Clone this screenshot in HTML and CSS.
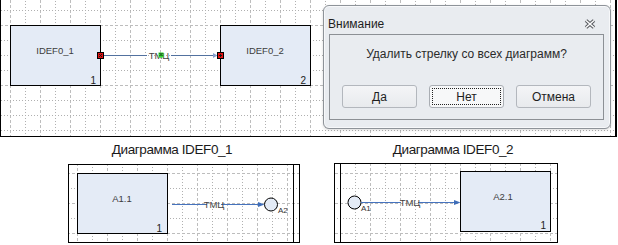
FILE: index.html
```html
<!DOCTYPE html>
<html lang="ru">
<head>
    <meta charset="UTF-8">
    <title>IDEF0 - Удаление стрелки</title>
    <link rel="stylesheet" href="styles.css">
</head>
<body>
    <div class="canvas canvas-main">
        <svg class="sheet" width="614" height="136">
            <defs>
                <pattern id="grid-main" x="9" y="25" width="30" height="60" patternUnits="userSpaceOnUse">
                    <line class="major" x1="0.5" y1="0" x2="0.5" y2="60"/>
                    <line class="minor" x1="15.5" y1="0" x2="15.5" y2="60"/>
                    <line class="major" x1="0" y1="0.5" x2="30" y2="0.5"/>
                    <line class="minor" x1="0" y1="15.5" x2="30" y2="15.5"/>
                    <line class="minor" x1="0" y1="30.5" x2="30" y2="30.5"/>
                    <line class="minor" x1="0" y1="45.5" x2="30" y2="45.5"/>
                </pattern>
            </defs>
            <rect width="614" height="136" fill="url(#grid-main)"/>

            <!-- blocks -->
            <rect class="box" x="9.5" y="25.5" width="90" height="60"/>
            <text class="box-name" x="54" y="54">IDEF0_1</text>
            <text class="box-num" x="95" y="84">1</text>

            <rect class="box" x="219.5" y="25.5" width="90" height="60"/>
            <text class="box-name" x="264" y="54">IDEF0_2</text>
            <text class="box-num" x="305" y="84">2</text>

            <!-- arrow -->
            <line class="link-main" x1="102" y1="55.5" x2="146" y2="55.5"/>
            <line class="link-main" x1="170" y1="55.5" x2="213" y2="55.5"/>
            <polygon class="head-main" points="212,53 216.5,55.5 212,58"/>
            <text class="link-label" x="158" y="59">ТМЦ</text>

            <rect class="grip-green" x="157.5" y="52.5" width="5" height="5"/>
            <path class="grip-mark" d="M158.5 53.5h1M160.5 53.5h1M159.5 54.5h1M158.5 55.5h1M160.5 55.5h1"/>

            <rect class="grip-red" x="96.5" y="52.5" width="6" height="6"/>
            <path class="grip-mark" d="M98 54.5h1M100 54.5h1M99 55.5h1M98 56.5h1M100 56.5h1"/>
            <rect class="grip-red" x="216.5" y="52.5" width="6" height="6"/>
            <path class="grip-mark" d="M219 54.5h1M218 55.5h3M219 56.5h1"/>
        </svg>

        <div class="dialog">
            <div class="dialog-head">
                <span class="dialog-title">Внимание</span>
                <svg class="dialog-close" width="12" height="10" viewBox="0 0 12 10">
                    <path d="M2 1.5 L10 8.5 M10 1.5 L2 8.5" stroke="#55585d" stroke-width="3.6" fill="none"/>
                    <path d="M2 1.5 L10 8.5 M10 1.5 L2 8.5" stroke="#fbfbfc" stroke-width="1.6" fill="none"/>
                </svg>
            </div>
            <div class="dialog-body">
                <p class="message">Удалить стрелку со всех диаграмм?</p>
                <div class="buttons">
                    <button class="btn">Да</button>
                    <button class="btn btn-focus">Нет</button>
                    <button class="btn">Отмена</button>
                </div>
            </div>
        </div>
    </div>

    <div class="row">
        <div class="panel">
            <div class="caption caption-left">Диаграмма IDEF0_1</div>
            <div class="canvas canvas-left">
                <svg class="sheet" width="230" height="77">
                    <defs>
                        <pattern id="grid-left" x="8" y="8" width="30" height="30" patternUnits="userSpaceOnUse">
                            <line class="major" x1="0.5" y1="0" x2="0.5" y2="30"/>
                            <line class="minor" x1="15.5" y1="0" x2="15.5" y2="30"/>
                            <line class="major" x1="0" y1="0.5" x2="30" y2="0.5"/>
                            <line class="minor" x1="0" y1="15.5" x2="30" y2="15.5"/>
                        </pattern>
                    </defs>
                    <rect width="230" height="77" fill="url(#grid-left)"/>

                    <rect class="box" x="8.5" y="8.5" width="90" height="60"/>
                    <text class="box-name" x="53" y="37">A1.1</text>
                    <text class="box-num" x="93" y="67">1</text>

                    <line class="link" x1="103" y1="39.5" x2="138" y2="39.5"/>
                    <line class="link" x1="152" y1="39.5" x2="190" y2="39.5"/>
                    <polygon class="head" points="189,37 195.5,39.5 189,42"/>
                    <text class="link-label" x="145" y="43">ТМЦ</text>

                    <circle class="node" cx="202" cy="39.5" r="6.5"/>
                    <text class="node-name" x="209" y="48">A2</text>

                    <line class="boundary" x1="224.5" y1="0" x2="224.5" y2="77"/>
                </svg>
            </div>
        </div>
        <div class="panel">
            <div class="caption caption-right">Диаграмма IDEF0_2</div>
            <div class="canvas canvas-right">
                <svg class="sheet" width="222" height="78">
                    <defs>
                        <pattern id="grid-right" x="5" y="9" width="30" height="30" patternUnits="userSpaceOnUse">
                            <line class="major" x1="0.5" y1="0" x2="0.5" y2="30"/>
                            <line class="minor" x1="15.5" y1="0" x2="15.5" y2="30"/>
                            <line class="major" x1="0" y1="0.5" x2="30" y2="0.5"/>
                            <line class="minor" x1="0" y1="15.5" x2="30" y2="15.5"/>
                        </pattern>
                    </defs>
                    <rect width="222" height="78" fill="url(#grid-right)"/>

                    <line class="boundary" x1="5.5" y1="0" x2="5.5" y2="78"/>

                    <circle class="node" cx="19.5" cy="38.5" r="6.5"/>
                    <text class="node-name" x="26" y="47">A1</text>

                    <line class="link" x1="26" y1="38.5" x2="66" y2="38.5"/>
                    <line class="link" x1="83" y1="38.5" x2="120" y2="38.5"/>
                    <polygon class="head" points="119,36 125.5,38.5 119,41"/>
                    <text class="link-label" x="75" y="42">ТМЦ</text>

                    <rect class="box" x="125.5" y="7.5" width="90" height="60"/>
                    <text class="box-name" x="168" y="36">A2.1</text>
                    <text class="box-num" x="211" y="65">1</text>
                </svg>
            </div>
        </div>
    </div>
</body>
</html>
```

FILE: styles.css
```css
body {
    margin: 0;
    width: 618px;
    height: 245px;
    overflow: hidden;
    background-color: #fff;
    font-family: 'Liberation Sans', Arial, sans-serif;
    color: #1a1a1a;
}
.canvas {
    position: relative;
    background-color: #fff;
}
.sheet {
    display: block;
}
.canvas-main {
    width: 614px;
    height: 136px;
    border-left: 1px solid #000;
    border-right: 2px solid #000;
    border-bottom: 1px solid #000;
}

/* grid */
.major {
    stroke: #bdbdbd;
    stroke-width: 1;
    stroke-dasharray: 3 2;
}
.minor {
    stroke: #b0b0b0;
    stroke-width: 1;
    stroke-dasharray: 1 2;
}

/* diagram parts */
.box {
    fill: #e4ebf6;
    stroke: #000;
    stroke-width: 1;
}
.box-name {
    font-family: 'Liberation Sans', Arial, sans-serif;
    font-size: 9.5px;
    fill: #3c3c3c;
    text-anchor: middle;
}
.box-num {
    font-family: 'Liberation Sans', Arial, sans-serif;
    font-size: 10px;
    fill: #222;
    text-anchor: end;
}
.link-main {
    stroke: #52719f;
    stroke-width: 1;
}
.head-main {
    fill: #86a3cf;
}
.link {
    stroke: #4673bd;
    stroke-width: 1;
}
.head {
    fill: #3f6db8;
}
.link-label {
    font-family: 'Liberation Sans', Arial, sans-serif;
    font-size: 9.5px;
    fill: #444;
    text-anchor: middle;
}
.grip-red {
    fill: #e31010;
    stroke: #000;
    stroke-width: 1;
}
.grip-green {
    fill: #30dd30;
}
.grip-mark {
    stroke: #1a1a1a;
    stroke-width: 1;
}
.node {
    fill: #e4ebf6;
    stroke: #000;
    stroke-width: 1;
}
.node-name {
    font-family: 'Liberation Sans', Arial, sans-serif;
    font-size: 8px;
    fill: #333;
}
.boundary {
    stroke: #000;
    stroke-width: 1;
}

/* dialog */
.dialog {
    position: absolute;
    left: 322px;
    top: 5px;
    width: 288px;
    height: 124px;
    box-sizing: border-box;
    border: 1px solid #8e9399;
    border-radius: 6px;
    background-color: #e9ecf0;
    box-shadow: inset 0 0 0 1px #f7f8fa, 0 1px 3px rgba(0, 0, 0, 0.15);
    font-size: 12px;
}
.dialog-head {
    display: flex;
    justify-content: space-between;
    align-items: center;
    height: 14px;
    padding: 11px 14px 3px 4px;
    line-height: 14px;
}
.dialog-title {
    color: #1e1e1e;
}
.dialog-close {
    display: block;
    margin-top: -1px;
}
.dialog-body {
    margin-left: 5px;
    width: 275px;
    height: 86px;
    box-sizing: border-box;
    border: 1px solid #8c9095;
}
.message {
    margin: 12px 0 0 0;
    line-height: 14px;
    text-align: center;
    color: #2a2a2a;
}
.buttons {
    display: flex;
    gap: 12px;
    margin: 24px 0 0 12px;
}
.btn {
    width: 75px;
    height: 23px;
    padding: 0;
    box-sizing: border-box;
    border: 1px solid #b3b7bd;
    border-radius: 3px;
    background: linear-gradient(#f4f5f7, #e8eaed);
    font-family: 'Liberation Sans', Arial, sans-serif;
    font-size: 12px;
    color: #1e1e1e;
}
.btn-focus {
    background: #f7f8f9;
    border-color: #a9adb3;
    outline: 1px dotted #222;
    outline-offset: -4px;
}

/* bottom diagrams */
.row {
    display: flex;
}
.panel {
    width: 309px;
}
.caption {
    margin-top: 5px;
    font-size: 13.5px;
    letter-spacing: -0.4px;
    line-height: 16px;
    text-align: center;
    color: #1a1a1a;
}
.caption-left {
    padding-left: 35px;
}
.caption-right {
    padding-right: 21px;
}
.canvas-left {
    margin: 6px 0 0 68px;
    width: 230px;
    height: 77px;
    border: 1px solid #000;
}
.canvas-right {
    margin: 5px 0 0 25px;
    width: 222px;
    height: 78px;
    border: 1px solid #000;
}
```
